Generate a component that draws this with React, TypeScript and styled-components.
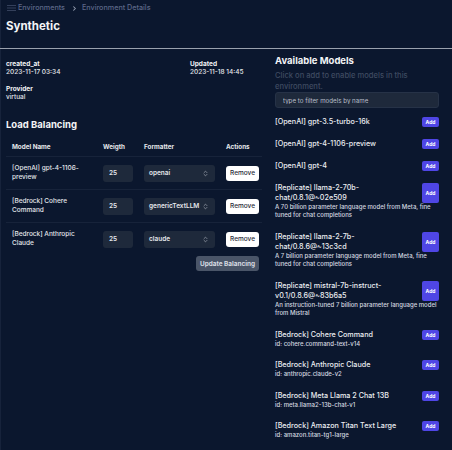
import { createGlobalStyle, styled } from 'styled-components';
import { ChevronRight, ChevronsUpDown } from 'lucide-react';

const GlobalStyle = createGlobalStyle`
  * {
    box-sizing: border-box;
  }

  html,
  body {
    margin: 0;
    background: #0b172e;
  }

  body {
    font-family: Inter, "Noto Sans", sans-serif;
    color: #e5e7eb;
    -webkit-font-smoothing: antialiased;
  }
`;

const Root = styled.div`
  min-height: 100vh;
  display: flex;
  flex-direction: column;
  box-shadow: inset 1px 0 #17233b;
`;

const Header = styled.header`
  display: flex;
  flex-direction: column;
  padding: 2px 6px 15px;
  border-bottom: 1px solid #9aa1ad;
`;

const Breadcrumb = styled.nav`
  display: flex;
  align-items: center;
  height: 10px;
  margin-top: 1px;
  font-size: 7.2px;
  font-weight: 500;
  color: #5d6888;
`;

const MenuIcon = styled.svg`
  margin: 0 2px 0 1px;
`;

const Crumb = styled.span`
  line-height: 10px;
`;

const CrumbSeparator = styled.span`
  display: flex;
  align-items: center;
  margin: 0 4px 0 6px;
  color: #9aa3b5;
`;

const Title = styled.h1`
  margin: 6px 0 0;
  font-size: 11.5px;
  line-height: 14px;
  font-weight: 700;
  color: #f3f4f6;
`;

const Main = styled.main`
  display: grid;
  grid-template-columns: 259px 164px;
  column-gap: 10px;
  padding: 0 13px 0 6px;
  align-items: start;
`;

const LeftColumn = styled.section`
  display: flex;
  flex-direction: column;
  padding-top: 11px;
`;

const InfoGrid = styled.div`
  display: grid;
  grid-template-columns: 184px 1fr;
  row-gap: 8.5px;
`;

const Field = styled.div`
  display: flex;
  flex-direction: column;
`;

const FieldLabel = styled.span`
  font-size: 6.5px;
  line-height: 8px;
  font-weight: 700;
  color: #f3f4f6;
`;

const FieldValue = styled.span`
  font-size: 6.5px;
  line-height: 8.5px;
  font-weight: 500;
  color: #e5e7eb;
`;

const SectionTitle = styled.h2<{ $top: number }>`
  margin: ${(p) => p.$top}px 0 0;
  font-size: 9.5px;
  line-height: 12px;
  font-weight: 700;
  color: #f3f4f6;
`;

const Table = styled.div`
  display: flex;
  flex-direction: column;
  margin-top: 6px;
  width: 256px;
`;

const TableRow = styled.div<{ $head?: boolean }>`
  display: grid;
  grid-template-columns: 91px 41px 82px 42px;
  align-items: center;
  height: ${(p) => (p.$head ? 19 : 33)}px;
  border-top: ${(p) => (p.$head ? 'none' : '1px solid #17233a')};
`;

const HeadCell = styled.div`
  padding-left: 6px;
  font-size: 6.3px;
  line-height: 8px;
  font-weight: 700;
  color: #e5e7eb;
`;

const Cell = styled.div`
  padding-left: 6px;
  display: flex;
  align-items: center;
`;

const ModelName = styled.span`
  font-size: 6.5px;
  line-height: 9px;
  font-weight: 500;
  color: #e5e7eb;
  padding-right: 6px;
`;

const WeightInput = styled.div`
  width: 30px;
  height: 17px;
  display: flex;
  align-items: center;
  padding-left: 6px;
  border-radius: 3px;
  background: #1e293b;
  font-size: 6.5px;
  font-weight: 600;
  color: #e5e7eb;
`;

const Select = styled.div`
  width: 71px;
  height: 17px;
  display: flex;
  align-items: center;
  justify-content: space-between;
  padding: 0 6px 0 5px;
  border-radius: 3px;
  background: #1e293b;
  font-size: 6.5px;
  font-weight: 600;
  color: #e5e7eb;
  svg {
    color: #9ca3af;
  }
`;

const RemoveButton = styled.button`
  width: 33px;
  height: 15px;
  padding: 0;
  border: none;
  border-radius: 3px;
  background: #ffffff;
  font-family: inherit;
  font-size: 6.5px;
  font-weight: 500;
  color: #1f2937;
`;

const TableFooter = styled.div`
  display: flex;
  justify-content: flex-end;
  padding: 1px 6px 0 0;
`;

const UpdateButton = styled.button`
  width: 63px;
  height: 15px;
  padding: 0;
  border: none;
  border-radius: 3px;
  background: #4a5568;
  font-family: inherit;
  font-size: 6.4px;
  font-weight: 700;
  color: #d8dce3;
`;

const RightColumn = styled.section`
  display: flex;
  flex-direction: column;
  padding-top: 6px;
`;

const Hint = styled.p`
  margin: 4px 0 0;
  font-size: 7.6px;
  line-height: 10.5px;
  color: #3f4b61;
  font-weight: 500;
`;

const FilterInput = styled.input`
  width: 100%;
  height: 16px;
  padding: 0 7px;
  border: 1px solid #263247;
  border-radius: 3px;
  background: #1e293b;
  font-family: inherit;
  font-size: 6.2px;
  color: #e5e7eb;
  outline: none;
  &::placeholder {
    color: #b9bfca;
  }
`;

const ModelList = styled.ul`
  list-style: none;
  margin: 8.5px 0 0;
  padding: 0;
  display: flex;
  flex-direction: column;
  row-gap: 12px;
`;

const ModelItem = styled.li`
  display: flex;
  flex-direction: column;
`;

const ModelHead = styled.div`
  display: flex;
  align-items: stretch;
  justify-content: space-between;
  column-gap: 6px;
`;

const ModelTitle = styled.span`
  flex: 1;
  font-size: 7.2px;
  line-height: 10px;
  font-weight: 500;
  color: #eceef2;
`;

const AddButton = styled.button`
  flex-shrink: 0;
  width: 17px;
  padding: 0;
  border: none;
  border-radius: 2px;
  background: #4f46e5;
  font-family: inherit;
  font-size: 5px;
  font-weight: 700;
  color: #ffffff;
`;

const ModelNote = styled.span`
  font-size: 6px;
  line-height: 8.5px;
  font-weight: 500;
  color: #d5d9e0;
`;

const balancing = [
  { name: '[OpenAI] gpt-4-1106-preview', weight: 25, formatter: 'openai' },
  { name: '[Bedrock] Cohere Command', weight: 25, formatter: 'genericTextLLM' },
  { name: '[Bedrock] Anthropic Claude', weight: 25, formatter: 'claude' },
];

const models: { name: string; note?: string }[] = [
  { name: '[OpenAI] gpt-3.5-turbo-16k' },
  { name: '[OpenAI] gpt-4-1106-preview' },
  { name: '[OpenAI] gpt-4' },
  {
    name: '[Replicate] llama-2-70b-chat/0.8.1@~02e509',
    note: 'A 70 billion parameter language model from Meta, fine tuned for chat completions',
  },
  {
    name: '[Replicate] llama-2-7b-chat/0.8.6@~13c3cd',
    note: 'A 7 billion parameter language model from Meta, fine tuned for chat completions',
  },
  {
    name: '[Replicate] mistral-7b-instruct-v0.1/0.8.6@~83b6a5',
    note: 'An instruction-tuned 7 billion parameter language model from Mistral',
  },
  { name: '[Bedrock] Cohere Command', note: 'id: cohere.command-text-v14' },
  { name: '[Bedrock] Anthropic Claude', note: 'id: anthropic.claude-v2' },
  { name: '[Bedrock] Meta Llama 2 Chat 13B', note: 'id: meta.llama2-13b-chat-v1' },
  { name: '[Bedrock] Amazon Titan Text Large', note: 'id: amazon.titan-tg1-large' },
];

export default function App() {
  return (
    <Root>
      <GlobalStyle />
      <Header>
        <Breadcrumb>
          <MenuIcon width="9" height="6" viewBox="0 0 9 6">
            <path d="M0 0.5H9M0 3H9M0 5.5H9" stroke="#34405b" strokeWidth="1" />
          </MenuIcon>
          <Crumb>Environments</Crumb>
          <CrumbSeparator>
            <ChevronRight size={7} strokeWidth={3.5} />
          </CrumbSeparator>
          <Crumb>Environment Details</Crumb>
        </Breadcrumb>
        <Title>Synthetic</Title>
      </Header>
      <Main>
        <LeftColumn>
          <InfoGrid>
            <Field>
              <FieldLabel>created_at</FieldLabel>
              <FieldValue>2023-11-17 03:34</FieldValue>
            </Field>
            <Field>
              <FieldLabel>Updated</FieldLabel>
              <FieldValue>2023-11-18 14:45</FieldValue>
            </Field>
            <Field>
              <FieldLabel>Provider</FieldLabel>
              <FieldValue>virtual</FieldValue>
            </Field>
          </InfoGrid>
          <SectionTitle $top={17.5}>Load Balancing</SectionTitle>
          <Table>
            <TableRow $head>
              <HeadCell>Model Name</HeadCell>
              <HeadCell>Weigth</HeadCell>
              <HeadCell>Formatter</HeadCell>
              <HeadCell>Actions</HeadCell>
            </TableRow>
            {balancing.map((row) => (
              <TableRow key={row.name}>
                <Cell>
                  <ModelName>{row.name}</ModelName>
                </Cell>
                <Cell>
                  <WeightInput>{row.weight}</WeightInput>
                </Cell>
                <Cell>
                  <Select>
                    <span>{row.formatter}</span>
                    <ChevronsUpDown size={7} strokeWidth={2.5} />
                  </Select>
                </Cell>
                <Cell>
                  <RemoveButton>Remove</RemoveButton>
                </Cell>
              </TableRow>
            ))}
          </Table>
          <TableFooter>
            <UpdateButton>Update Balancing</UpdateButton>
          </TableFooter>
        </LeftColumn>
        <RightColumn>
          <SectionTitle $top={0}>Available Models</SectionTitle>
          <Hint>Click on add to enable models in this environment.</Hint>
          <FilterInput placeholder="type to filter models by name" />
          <ModelList>
            {models.map((model) => (
              <ModelItem key={model.name}>
                <ModelHead>
                  <ModelTitle>{model.name}</ModelTitle>
                  <AddButton>Add</AddButton>
                </ModelHead>
                {model.note && <ModelNote>{model.note}</ModelNote>}
              </ModelItem>
            ))}
          </ModelList>
        </RightColumn>
      </Main>
    </Root>
  );
}
